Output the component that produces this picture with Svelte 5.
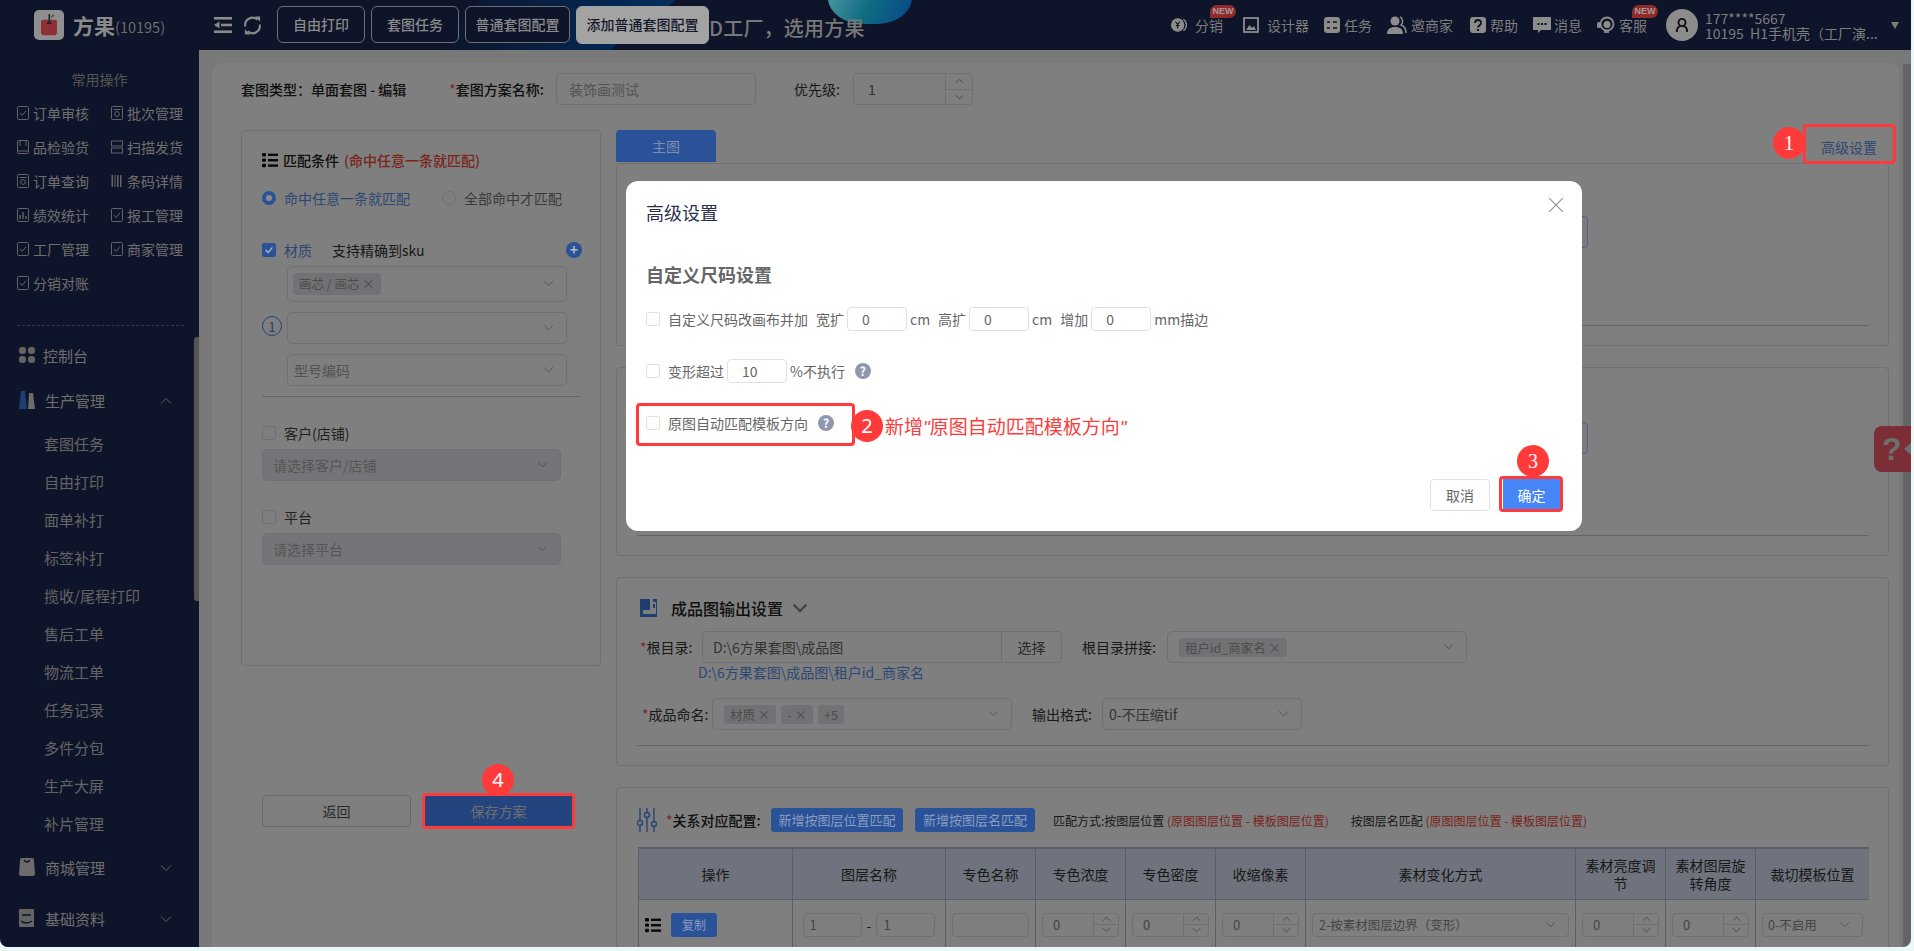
<script>
  const tabs = ['自由打印', '套图任务', '普通套图配置'];
  const quick = [
    ['订单审核', 'check'], ['批次管理', 'scan'], ['品检验货', 'book'], ['扫描发货', 'split'],
    ['订单查询', 'scan'], ['条码详情', 'bars'], ['绩效统计', 'chart'], ['报工管理', 'check'],
    ['工厂管理', 'check'], ['商家管理', 'check'], ['分销对账', 'check']
  ];
  const subs = ['套图任务', '自由打印', '面单补打', '标签补打', '揽收/尾程打印', '售后工单', '物流工单', '任务记录', '多件分包', '生产大屏', '补片管理'];
  const cols = [154, 153, 90, 90, 90, 90, 270, 90, 90, 114];
  const heads = ['操作', '图层名称', '专色名称', '专色浓度', '专色密度', '收缩像素', '素材变化方式', '素材亮度调节', '素材图层旋转角度', '裁切模板位置'];
</script>

{#snippet chev()}
  <svg class="chev" viewBox="0 0 12 8" aria-hidden="true"><path d="M1 1.5 6 6.5 11 1.5" fill="none" stroke="currentColor" stroke-width="1"/></svg>
{/snippet}

{#snippet listIcon(cls)}
  <svg class={cls} viewBox="0 0 16 16" aria-hidden="true"><g fill="currentColor"><rect x="0" y="1" width="4" height="3.4" rx="1"/><rect x="0" y="6.4" width="4" height="3.4" rx="1"/><rect x="0" y="11.8" width="4" height="3.4" rx="1"/><rect x="6" y="1.6" width="10" height="2.4"/><rect x="6" y="7" width="10" height="2.4"/><rect x="6" y="12.4" width="10" height="2.4"/></g></svg>
{/snippet}

{#snippet spin()}
  <span class="spin"><span>
    <svg viewBox="0 0 10 6" aria-hidden="true"><path d="M1 5 5 1 9 5" fill="none" stroke="currentColor"/></svg>
  </span><span>
    <svg viewBox="0 0 10 6" aria-hidden="true"><path d="M1 1 5 5 9 1" fill="none" stroke="currentColor"/></svg>
  </span></span>
{/snippet}

{#snippet help()}
  <span class="qm">?</span>
{/snippet}

{#snippet quickIcon(kind)}
  <svg class="qi" viewBox="0 0 12 14" aria-hidden="true">
    {#if kind === 'bars'}
      <g fill="currentColor"><rect x="0.5" y="1" width="1.5" height="12"/><rect x="3.5" y="1" width="1" height="12"/><rect x="6" y="1" width="1.5" height="12"/><rect x="9" y="1" width="1.5" height="12"/></g>
    {:else if kind === 'split'}
      <g fill="none" stroke="currentColor"><rect x="0.5" y="1" width="11" height="5"/><rect x="0.5" y="8" width="11" height="5"/></g>
    {:else}
      <rect x="0.5" y="0.5" width="11" height="13" rx="1" fill="none" stroke="currentColor"/>
      {#if kind === 'check'}<path d="M3 7 5.2 9.4 9 4.6" fill="none" stroke="currentColor"/>{/if}
      {#if kind === 'scan'}<circle cx="6" cy="8" r="2.4" fill="none" stroke="currentColor"/><path d="M2.5 3.5H9.5" stroke="currentColor"/>{/if}
      {#if kind === 'book'}<path d="M3 .5V6M9 .5V6" stroke="currentColor"/><path d="M.5 11H11.5" stroke="currentColor"/>{/if}
      {#if kind === 'chart'}<path d="M3 11V7M6 11V4M9 11V8" stroke="currentColor" stroke-width="1.4"/>{/if}
    {/if}
  </svg>
{/snippet}

<div class="app">
  <header class="top">
    <span class="glow"></span>
    <span class="blob"></span>
    <div class="brand">
      <svg class="logo" viewBox="0 0 30 30" aria-hidden="true">
        <rect width="30" height="30" rx="5" fill="#8f8f8f"/>
        <path d="M7 11.5c0-1 1-1.8 2-1.8h12c1 0 2 .8 2 1.8v11c0 1.5-1.2 2.8-2.8 2.8H9.8C8.2 25.3 7 24 7 22.500z" fill="#8f2f36"/>
        <path d="M14.500 4h1.600v8h1.400v2h-4.500v-2h1.500z" fill="#222"/>
        <path d="M16.500 7.500c.5-2 2-3 4-3 0 2-1.500 3.200-4 3z" fill="#2f6a3c"/>
      </svg>
      <span class="bname">方果</span><span class="bnum">(10195)</span>
    </div>
    <svg class="tool first" viewBox="0 0 18 16" aria-hidden="true"><g fill="#8a8a8a"><rect width="18" height="2.600"/><rect x="7" y="6.700" width="11" height="2.600"/><rect y="13.400" width="18" height="2.600"/><path d="M5.500 4.500V11.500L0 8z"/></g></svg>
    <svg class="tool second" viewBox="0 0 20 20" aria-hidden="true"><g fill="none" stroke="#8a8a8a" stroke-width="2.200"><path d="M2.500 11A7.500 7.500 0 0 1 15 4"/><path d="M17.500 9A7.500 7.500 0 0 1 5 16"/></g><path d="M12.500 .5H18V6z M7.500 19.500H2V14z" fill="#8a8a8a"/></svg>
    <nav class="tabs">
      {#each tabs as t}<span class="tab">{t}</span>{/each}
      <span class="tab on">添加普通套图配置</span>
    </nav>
    <span class="slogan">D工厂，选用方果</span>
    <div class="navr">
      <span class="ni wide">
        <svg class="i16" viewBox="0 0 18 18" aria-hidden="true"><circle cx="7.500" cy="9" r="7.500" fill="#8c8c8c"/><path d="M14 2.500a8 8 0 0 1 0 13" fill="none" stroke="#8c8c8c" stroke-width="1.600"/><path d="M5 5 7.500 8.500 10 5M7.500 8.500V13M5.500 9.500H9.500" fill="none" stroke="#111" stroke-width="1.200"/></svg>
        分销<em class="new n1">NEW</em>
      </span>
      <span class="ni">
        <svg class="i16" viewBox="0 0 16 16" aria-hidden="true"><rect x="1" y="1" width="14" height="14" fill="none" stroke="#8c8c8c" stroke-width="1.800"/><path d="M3 13l3.500-5 2.500 3 2-2 2 4z" fill="#8c8c8c"/></svg>
        设计器
      </span>
      <span class="ni">
        <svg class="i16" viewBox="0 0 16 16" aria-hidden="true"><rect width="16" height="16" rx="3" fill="#8c8c8c"/><path d="M3 5h3M3 11h3M9 5h4M9 11h4" stroke="#111" stroke-width="1.300"/></svg>
        任务
      </span>
      <span class="ni">
        <svg class="i20" viewBox="0 0 20 18" aria-hidden="true"><circle cx="8" cy="5" r="4.500" fill="#8c8c8c"/><path d="M0 18c0-5 3-7 8-7s8 2 8 7z" fill="#8c8c8c"/><path d="M13 1c3 1 3.500 6 1 8 3 1 5 4 5 8" fill="none" stroke="#8c8c8c" stroke-width="1.500"/></svg>
        邀商家
      </span>
      <span class="ni">
        <svg class="i16" viewBox="0 0 16 16" aria-hidden="true"><rect width="16" height="16" rx="3" fill="#8c8c8c"/><path d="M5 6c0-4 6-4 6 0 0 2.500-3 2.500-3 4.500" fill="none" stroke="#111" stroke-width="1.800"/><rect x="7" y="12" width="2" height="2" fill="#111"/></svg>
        帮助
      </span>
      <span class="ni">
        <svg class="i18" viewBox="0 0 18 18" aria-hidden="true"><path d="M0 1h18v13H8l-3 3v-3H0z" fill="#8c8c8c"/><g fill="#111"><rect x="4.500" y="7" width="2" height="2"/><rect x="8" y="7" width="2" height="2"/><rect x="11.500" y="7" width="2" height="2"/></g></svg>
        消息
      </span>
      <span class="ni">
        <svg class="i18" viewBox="0 0 18 18" aria-hidden="true"><circle cx="10" cy="8" r="6.500" fill="none" stroke="#8c8c8c" stroke-width="1.800"/><rect x="0" y="6" width="4" height="6" rx="1.500" fill="#8c8c8c"/><circle cx="10" cy="8.500" r="3.500" fill="#8c8c8c"/><path d="M7 16h5" stroke="#8c8c8c" stroke-width="1.800"/></svg>
        客服<em class="new n2">NEW</em>
      </span>
      <span class="avatar">
        <svg viewBox="0 0 16 18" aria-hidden="true"><circle cx="8" cy="6" r="4" fill="none" stroke="#111" stroke-width="2.200"/><path d="M2 17c0-5 2-7 6-7s6 2 6 7" fill="none" stroke="#111" stroke-width="2.200"/></svg>
      </span>
      <span class="user">
        <span>177****5667</span>
        <span>10195&nbsp; H1手机壳（工厂演...</span>
      </span>
      <span class="caret"></span>
    </div>
  </header>

  <div class="body">
    <aside class="side">
      <div class="qtitle">常用操作</div>
      <div class="qgrid">
        {#each quick as q}
          <span class="qitem">{@render quickIcon(q[1])}{q[0]}</span>
        {/each}
      </div>
      <div class="dash"></div>
      <div class="mrow first">
        <svg class="mi" viewBox="0 0 16 16" aria-hidden="true"><g fill="#c8c8c8"><rect width="7" height="7" rx="3"/><rect x="9" width="7" height="7" rx="3"/><rect y="9" width="7" height="7" rx="3"/><rect x="9" y="9" width="7" height="7" rx="3"/></g></svg>
        <span class="mt narrow">控制台</span>
      </div>
      <div class="mrow second">
        <svg class="mi" viewBox="0 0 16 18" aria-hidden="true"><path d="M2 0h4l2 18H0z" fill="#3f7ee0"/><path d="M10 2h4l2 16H9z" fill="#d8d8d8"/></svg>
        <span class="mt">生产管理</span>
        <svg class="mc" viewBox="0 0 12 8" aria-hidden="true"><path d="M1 6.500 6 1.500 11 6.500" fill="none" stroke="currentColor"/></svg>
      </div>
      <div class="subs">
        {#each subs as s}<div class="sub">{s}</div>{/each}
      </div>
      <div class="mrow third">
        <svg class="mi" viewBox="0 0 16 18" aria-hidden="true"><path d="M1 2q0-2 2-2h10q2 0 2 2l1 14q0 2-2 2H2q-2 0-2-2z" fill="#d8d8d8"/><path d="M5 2q3 4 6 0" fill="none" stroke="#1c2852" stroke-width="1.500"/></svg>
        <span class="mt">商城管理</span>
        <svg class="mc" viewBox="0 0 12 8" aria-hidden="true"><path d="M1 1.500 6 6.500 11 1.500" fill="none" stroke="currentColor"/></svg>
      </div>
      <div class="mrow fourth">
        <svg class="mi" viewBox="0 0 16 18" aria-hidden="true"><rect width="15" height="18" rx="1" fill="#c8c8c8"/><path d="M3 6h9M2 12q5 4 11 0" fill="none" stroke="#1c2852" stroke-width="1.500"/></svg>
        <span class="mt">基础资料</span>
        <svg class="mc" viewBox="0 0 12 8" aria-hidden="true"><path d="M1 1.500 6 6.500 11 1.500" fill="none" stroke="currentColor"/></svg>
      </div>
      <span class="sthumb"></span>
    </aside>

    <main class="main">
      <div class="card">
        <div class="headrow">
          <span class="strong">套图类型：单面套图 - 编辑</span>
          <span class="strong nameLabel"><i class="star">*</i>套图方案名称:</span>
          <span class="field nameInput ph">装饰画测试</span>
          <span class="prio">优先级:</span>
          <span class="field prioInput"><span class="pv">1</span>{@render spin()}</span>
        </div>
        <div class="cols">
          <div class="leftcol">
            <section class="panel">
              <div class="ptitle">{@render listIcon('plist')}<b>匹配条件</b><b class="red">(命中任意一条就匹配)</b></div>
              <div class="radios">
                <span class="radio"><i class="dot on"></i><span class="blue">命中任意一条就匹配</span></span>
                <span class="radio r2"><i class="dot"></i><span>全部命中才匹配</span></span>
              </div>
              <div class="check first">
                <i class="box on"><svg viewBox="0 0 14 14" aria-hidden="true"><path d="M3 7 6 10 11 4" fill="none" stroke="#b8b8b8" stroke-width="1.600"/></svg></i>
                <span class="blue">材质</span><span class="hint">支持精确到sku</span>
                <i class="plus">+</i>
              </div>
              <div class="indent"><span class="sel tall"><span class="tag">画芯 / 画芯 <u>×</u></span>{@render chev()}</span></div>
              <div class="indent mid"><i class="one">1</i><span class="sel">{@render chev()}</span></div>
              <div class="indent mid"><span class="sel ph">型号编码{@render chev()}</span></div>
              <div class="rule"></div>
              <div class="check cust"><i class="box"></i><span>客户(店铺)</span></div>
              <span class="sel dis">请选择客户/店铺{@render chev()}</span>
              <div class="check cust"><i class="box"></i><span>平台</span></div>
              <span class="sel dis">请选择平台{@render chev()}</span>
            </section>
            <div class="actions">
              <button class="btn">返回</button>
              <button class="btn pri">保存方案</button>
            </div>
          </div>

          <div class="rightcol">
            <div class="tabrow"><span class="mtab">主图</span><span class="adv">高级设置</span></div>
            <section class="box1 c1"><span class="ghost one1"></span><div class="hr"></div></section>
            <section class="box1 c2"><span class="ghost two1"></span><div class="hr"></div></section>
            <section class="box1 c3">
              <div class="ctitle">
                <svg class="ci" viewBox="0 0 17 18" aria-hidden="true"><path d="M0 0h10v11H3v4h13V0h1v18H0z" fill="#3f7ee0"/><path d="M13 0h3v3h-3zM13 5h2v4h-2z" fill="#3f7ee0"/></svg>
                <b>成品图输出设置</b>
                <svg class="cc" viewBox="0 0 16 10" aria-hidden="true"><path d="M1.500 1.500 8 8 14.500 1.500" fill="none" stroke="#888" stroke-width="2.400"/></svg>
              </div>
              <div class="frow r1">
                <span class="lab w54"><i class="star">*</i>根目录:</span>
                <span class="field rootInput val">D:\6方果套图\成品图</span>
                <span class="choose">选择</span>
                <span class="lab w76 ml20">根目录拼接:</span>
                <span class="sel wide300"><span class="tag">租户id_商家名 <u>×</u></span>{@render chev()}</span>
              </div>
              <div class="plink">D:\6方果套图\成品图\租户id_商家名</div>
              <div class="frow r2b">
                <span class="lab w66"><i class="star">*</i>成品命名:</span>
                <span class="sel wide300"><span class="tag">材质 <u>×</u></span><span class="tag">- <u>×</u></span><span class="tag">+5</span>{@render chev()}</span>
                <span class="lab w63 ml20">输出格式:</span>
                <span class="sel wide200 val">0-不压缩tif{@render chev()}</span>
              </div>
              <div class="hr h3"></div>
            </section>
            <section class="box1 c4">
              <div class="rtitle">
                <svg class="ri" viewBox="0 0 20 24" aria-hidden="true"><g fill="none" stroke="#4a86e8" stroke-width="1.400"><path d="M3 0v24M10 0v24M17 0v24"/><circle cx="3" cy="15" r="2.500" fill="#fff"/><circle cx="10" cy="7" r="2.500" fill="#fff"/><circle cx="17" cy="16" r="2.500" fill="#fff"/></g></svg>
                <b class="rlab"><i class="star">*</i>关系对应配置:</b>
                <span class="bb b132">新增按图层位置匹配</span>
                <span class="bb b120">新增按图层名匹配</span>
                <span class="note n1st">匹配方式:按图层位置 <em>(原图图层位置 - 模板图层位置)</em></span>
                <span class="note">按图层名匹配 <em>(原图图层位置 - 模板图层位置)</em></span>
              </div>
              <div class="twrap">
                <table>
                  <colgroup>{#each cols as c}<col style:width="{c}px" />{/each}</colgroup>
                  <thead><tr>{#each heads as h}<th>{h}</th>{/each}</tr></thead>
                  <tbody>
                    <tr>
                      <td><div class="cell">{@render listIcon('tlist')}<span class="copy">复制</span></div></td>
                      <td><div class="cell c"><span class="ti w59">1</span><span>-</span><span class="ti w59">1</span></div></td>
                      <td><div class="cell c"><span class="ti w79"></span></div></td>
                      {#each [0, 1, 2] as _}
                        <td><div class="cell c"><span class="ti num">0{@render spin()}</span></div></td>
                      {/each}
                      <td><div class="cell c"><span class="ti w259">2-按素材图层边界（变形）{@render chev()}</span></div></td>
                      {#each [0, 1] as _}
                        <td><div class="cell c"><span class="ti num">0{@render spin()}</span></div></td>
                      {/each}
                      <td><div class="cell"><span class="ti last">0-不启用{@render chev()}</span></div></td>
                    </tr>
                  </tbody>
                </table>
              </div>
            </section>
          </div>
        </div>
      </div>
      <span class="vbar"></span>
      <span class="helpw">
        <b>?</b><i></i>
      </span>
    </main>
  </div>

  <div class="mask"></div>

  <div class="modal">
    <div class="mhead">高级设置
      <svg class="x" viewBox="0 0 14 14" aria-hidden="true"><path d="M0 0 14 14M14 0 0 14" stroke="#8f8f94" stroke-width="1.100"/></svg>
    </div>
    <div class="msec">自定义尺码设置</div>
    <div class="mr rowa">
      <i class="box"></i><span class="tx">自定义尺码改画布并加</span>
      <span class="tx l8">宽扩</span><span class="mi60">0</span><span class="tx">cm</span>
      <span class="tx l8">高扩</span><span class="mi60">0</span><span class="tx">cm</span>
      <span class="tx l8">增加</span><span class="mi60">0</span><span class="tx">mm描边</span>
    </div>
    <div class="mr">
      <i class="box"></i><span class="tx">变形超过</span><span class="mi60">10</span><span class="tx">%不执行</span>{@render help()}
    </div>
    <div class="mr">
      <i class="box"></i><span class="tx">原图自动匹配模板方向</span>{@render help()}
    </div>
    <div class="mfoot">
      <button class="mb">取消</button>
      <button class="mb ok">确定</button>
    </div>
  </div>

  <span class="rb rb1"></span>
  <span class="rb rb2"></span>
  <span class="rb rb3"></span>
  <span class="rb rb4"></span>
  <span class="badge bd1 serif">1</span>
  <span class="badge bd2">2</span>
  <span class="badge bd3 serif">3</span>
  <span class="badge bd4">4</span>
  <span class="redtext">新增<span class="it">"</span>原图自动匹配模板方向<span class="it">"</span></span>
</div>

<style>
  :global(body) { background: #e9f8f8; font-family: "Noto Sans CJK SC", "Noto Sans", sans-serif; }
  .app { position: relative; width: 1911px; height: 947px; overflow: hidden; border-radius: 0 0 8px 8px; font-size: 14px; display: flex; flex-direction: column; background: #f2f3f3; color: #3a3a3a; }
  i, em, u { font-style: normal; text-decoration: none; }

  /* header */
  .top { position: relative; z-index: 5; height: 50px; flex: none; display: flex; align-items: center; background: #0e1429; color: #7e7e7e; overflow: hidden; }
  .glow { position: absolute; left: 430px; top: 0; width: 250px; height: 50px; clip-path: polygon(50px 0, 246px 0, 180px 50px, 6px 50px); background: linear-gradient(90deg, #0e1429 0%, #04264f 70%, #03305e 100%); }
  .blob { position: absolute; left: 828px; top: -40px; width: 84px; height: 64px; border-radius: 0 0 36px 36px / 0 0 26px 26px; background: linear-gradient(115deg, #5fa7ad 0%, #0e6b80 55%, #08468c 100%); }
  .brand { position: relative; width: 214px; flex: none; padding-left: 34px; box-sizing: border-box; display: flex; align-items: center; }
  .logo { width: 30px; height: 30px; margin-right: 9px; }
  .bname { font-size: 21px; font-weight: 700; color: #8a8a8a; }
  .bnum { font-size: 14.500px; color: #6c6c70; margin-top: 2px; }
  .tool { position: relative; flex: none; }
  .tool.first { width: 18px; height: 16px; }
  .tool.second { width: 19px; height: 19px; margin-left: 11px; }
  .tabs { position: relative; display: flex; gap: 6px; margin-left: 15px; }
  .tab { height: 37px; box-sizing: border-box; line-height: 35px; padding: 0 15px; border: 1px solid #6f7074; border-radius: 6px; font-size: 14px; font-weight: 500; color: #8a8a8a; background: #0e1429; }
  .tab:nth-child(3) { padding: 0 9.500px; }
  .tab.on { background: #a3a3a3; border-color: #a3a3a3; color: #14182c; padding: 0 9.500px; height: 38px; }
  .slogan { position: relative; font-size: 20px; font-weight: 500; color: #787878; letter-spacing: .2px; margin-top: 4px; }
  .navr { position: relative; margin-left: auto; display: flex; align-items: center; }
  .ni { position: relative; display: flex; align-items: center; gap: 4px; margin-right: 15px; font-size: 14px; color: #7e7e7e; white-space: nowrap; }
  .ni.wide { margin-right: 20px; gap: 8px; }
  .ni:nth-child(2) { gap: 8px; }
  .ni:nth-child(4) { margin-right: 17px; }
  .ni:nth-child(6) { gap: 3px; }
  .ni:nth-child(7) { margin-right: 19px; }
  .i16 { width: 16px; height: 16px; flex: none; }
  .i18 { width: 18px; height: 18px; flex: none; }
  .i20 { width: 20px; height: 18px; flex: none; }
  .new { position: absolute; top: -10px; left: 35px; width: 26px; height: 13px; line-height: 13px; border-radius: 7px 7px 7px 0; background: #8f2a2a; color: #a99; font-size: 9px; font-weight: 700; text-align: center; font-family: "Liberation Sans", sans-serif; }
  .new.n1 { left: 39px; }
  .avatar { width: 32px; height: 32px; border-radius: 50%; background: #8c8c8c; display: flex; align-items: center; justify-content: center; flex: none; }
  .avatar svg { width: 14px; height: 16px; }
  .user { width: 178px; margin-left: 7px; display: flex; flex-direction: column; line-height: 15px; font-size: 14px; color: #7e7e7e; white-space: nowrap; margin-top: 1px; }
  .caret { width: 0; height: 0; border: 4px solid transparent; border-top: 7px solid #7e7e7e; border-bottom: 0; margin: 0 12px 0 8px; }

  /* body */
  .body { flex: 1; min-height: 0; display: flex; }
  .side { position: relative; width: 199px; flex: none; background: #1c2852; color: #dcdcdc; padding-top: 19px; box-sizing: border-box; }
  .qtitle { text-align: center; line-height: 20px; color: #aaa; }
  .qgrid { display: grid; grid-template-columns: 94px 94px; grid-auto-rows: 34px; margin: 7px 0 0 17px; }
  .qitem { display: flex; align-items: center; gap: 4px; font-size: 14px; white-space: nowrap; }
  .qi { width: 12px; height: 14px; flex: none; color: #c8c8c8; }
  .dash { margin: 25px 15px 0 17px; border-top: 1px dashed #6d7388; }
  .mrow { position: relative; height: 40px; display: flex; align-items: center; padding-left: 19px; font-size: 15px; }
  .mrow.first { margin-top: 9px; }
  .mrow.second { margin-top: 5px; }
  .mrow.third { margin-top: 4px; }
  .mrow.fourth { margin-top: 11px; }
  .mi { width: 16px; height: 18px; flex: none; }
  .mt { margin-left: 10px; }
  .mt.narrow { margin-left: 8px; }
  .mc { position: absolute; left: 160px; top: 17px; width: 12px; height: 8px; color: #c8c8c8; }
  .subs { margin-top: 5px; }
  .sub { height: 38px; line-height: 38px; padding-left: 44px; font-size: 15px; color: #c8c8c8; }
  .sthumb { position: absolute; left: 194px; top: 287px; width: 5px; height: 264px; background: #aaa; border-radius: 3px 0 0 3px; }

  .main { position: relative; flex: 1; min-width: 0; padding: 13px 12px 0 13px; box-sizing: border-box; }
  .vbar { position: absolute; right: 0; top: 14px; bottom: 0; width: 8px; background: #c8c8ca; }
  .card { height: 100%; background: #fff; border-radius: 10px 10px 0 0; padding: 10px 10px 0 29px; box-sizing: border-box; overflow: hidden; }
  .headrow { display: flex; align-items: center; height: 32px; white-space: nowrap; }
  .strong { font-weight: 500; color: #222; }
  .nameLabel { margin-left: 43px; }
  .star { color: #f44; font-weight: 400; }
  .field { box-sizing: border-box; height: 32px; border: 1px solid #dfe1e8; border-radius: 4px; line-height: 30px; padding: 0 10px; background: #fff; display: flex; align-items: center; }
  .ph { color: #a6a6a6; }
  .val { color: #666; }
  .nameInput { width: 200px; margin-left: 12px; padding-left: 12px; }
  .prio { margin-left: 38px; width: 59px; color: #333; }
  .prioInput { width: 120px; padding: 0 0 0 14px; color: #666; justify-content: space-between; }
  .spin { align-self: stretch; width: 26px; display: flex; flex-direction: column; border-left: 1px solid #dfe1e8; color: #888; flex: none; }
  .spin > span { flex: 1; display: flex; align-items: center; justify-content: center; }
  .spin > span + span { border-top: 1px solid #dfe1e8; }
  .spin svg { width: 9px; height: 6px; }

  .cols { display: flex; gap: 15px; margin-top: 25px; align-items: flex-start; }
  .leftcol { width: 360px; flex: none; }
  .panel { box-sizing: border-box; height: 536px; border: 1px solid #dfe1e8; border-radius: 4px; padding: 19px 20px 0; display: flex; flex-direction: column; align-items: flex-start; }
  .ptitle { display: flex; align-items: center; height: 20px; gap: 5px; white-space: nowrap; color: #222; }
  .ptitle b { font-weight: 500; }
  .red { color: #f24a3a; }
  :global(.plist) { width: 16px; height: 16px; color: #111; flex: none; }
  .radios { display: flex; margin-top: 18px; height: 20px; }
  .radio { display: flex; align-items: center; gap: 8px; white-space: nowrap; color: #777; }
  .r2 { margin-left: 32px; }
  .blue { color: #5b8fe8; }
  .dot { position: relative; width: 14px; height: 14px; border-radius: 50%; border: 1px solid #dfe1e8; box-sizing: border-box; }
  .dot.on { z-index: 7; border: 4px solid #2a5299; background: #8c8c8c; }
  .check { position: relative; display: flex; align-items: center; gap: 8px; height: 20px; width: 100%; color: #444; }
  .check.first { margin-top: 32px; }
  .check.cust { margin-top: 26px; }
  .box { position: relative; width: 14px; height: 14px; box-sizing: border-box; border: 1px solid #dfe1e8; border-radius: 2px; background: #fff; flex: none; display: block; }
  .box.on { z-index: 7; background: #2a5299; border-color: #2a5299; }
  .box svg { display: block; width: 12px; height: 12px; }
  .hint { margin-left: 12px; color: #333; }
  .plus { position: absolute; z-index: 7; right: -2px; top: 2px; width: 16px; height: 16px; border-radius: 50%; background: #2a5299; color: #b8b8b8; text-align: center; line-height: 15px; font-weight: 700; font-size: 14px; }
  .indent { position: relative; margin: 6px 0 0 25px; width: 280px; }
  .indent.mid { margin-top: 10px; }
  .one { position: absolute; left: -25px; top: 4px; width: 20px; height: 20px; box-sizing: border-box; border: 1px solid #4a86e8; border-radius: 50%; text-align: center; line-height: 18px; color: #4a86e8; }
  .sel { position: relative; box-sizing: border-box; height: 32px; width: 280px; border: 1px solid #dfe1e8; border-radius: 5px; display: flex; align-items: center; gap: 5px; padding-left: 5px; white-space: nowrap; background: #fff; }
  .indent .ph, .val.sel { padding-left: 6px; }
  .sel.tall { height: 36px; }
  .sel.dis { width: 299px; margin-top: 6px; background: #e8eaf2; color: #aaa; padding-left: 10px; }
  .chev { position: absolute; right: 12px; top: 50%; margin-top: -4px; width: 11px; height: 7px; color: #999; }
  .tag { height: 22px; line-height: 22px; padding: 0 6px; border-radius: 3px; background: #e2e4ea; color: #999; font-size: 12.500px; flex: none; }
  .rule { align-self: stretch; border-top: 1px solid #c8cad2; margin: 10px -1px 0 0; }
  .actions { display: flex; gap: 13px; padding-left: 21px; margin-top: 129px; }
  .btn { width: 149px; height: 32px; border: 1px solid #cfd1d8; border-radius: 4px; background: #fff; font: inherit; color: #555; padding: 0; }
  .btn.pri { background: #4688fe; border-color: #4688fe; color: #ddd; }

  .rightcol { flex: 1; min-width: 0; }
  .tabrow { display: flex; justify-content: space-between; align-items: center; height: 33px; padding-right: 12px; }
  .mtab { position: relative; z-index: 7; width: 100px; height: 32px; line-height: 32px; text-align: center; border-radius: 4px 4px 0 0; background: #2a5299; color: #7f8cab; align-self: flex-start; }
  .adv { color: #5b8fe8; }
  .box1 { position: relative; box-sizing: border-box; border: 1px solid #dfe1e8; border-radius: 4px; margin-bottom: 21px; padding: 0 19px; }
  .c1 { height: 183px; }
  .c2 { height: 189px; }
  .c3 { height: 189px; padding-top: 18px; }
  .c4 { height: 300px; padding: 20px 19px 0 21px; }
  .ghost { position: absolute; right: 300px; width: 200px; height: 32px; border: 1px solid #a8c2ee; border-radius: 4px; box-sizing: border-box; background: #f4f6fb; }
  .one1 { top: 52px; }
  .two1 { top: 54px; }
  .hr { position: absolute; left: 20px; right: 19px; top: 161px; border-top: 1px solid #c8cad2; }
  .c2 .hr { top: 167px; }
  .hr.h3 { top: 167px; }
  .ctitle { display: flex; align-items: center; height: 24px; padding-left: 4px; }
  .ctitle b { font-size: 16px; font-weight: 500; color: #222; margin-left: 14px; }
  .ci { width: 17px; height: 18px; }
  .cc { width: 16px; height: 10px; margin-left: 9px; }
  .frow { display: flex; align-items: center; padding-left: 4px; white-space: nowrap; }
  .r1 { margin-top: 11px; }
  .r2b { margin-top: 17px; padding-left: 6px; }
  .lab { color: #333; box-sizing: content-box; flex: none; }
  .w54 { width: 54px; margin-right: 8px; }
  .w76 { width: 76px; margin-right: 9px; }
  .w66 { width: 66px; margin-right: 4px; }
  .w63 { width: 63px; margin-right: 7px; }
  .ml20 { margin-left: 20px; }
  .rootInput { width: 300px; border-radius: 4px 0 0 4px; }
  .choose { width: 60px; height: 32px; box-sizing: border-box; border: 1px solid #dfe1e8; border-left: 0; border-radius: 0 4px 4px 0; text-align: center; line-height: 30px; color: #555; }
  .wide300 { width: 300px; padding-left: 11px; }
  .wide200 { width: 200px; padding-left: 10px; }
  .frow .tag { height: 19px; line-height: 19px; }
  .plink { margin-left: 62px; height: 18px; line-height: 18px; color: #5b8fe8; white-space: nowrap; }
  .rtitle { display: flex; align-items: center; height: 24px; white-space: nowrap; }
  .ri { width: 20px; height: 24px; flex: none; margin-left: -1px; }
  .rlab { font-weight: 500; color: #222; margin-left: 9px; width: 105px; }
  .bb { position: relative; z-index: 7; height: 24px; line-height: 24px; background: #2a5299; color: #8c9cbf; border-radius: 3px; font-size: 13px; text-align: center; flex: none; }
  .b132 { width: 132px; }
  .b120 { width: 120px; margin-left: 12px; }
  .note { font-size: 12px; color: #333; margin-left: 22px; }
  .note em { color: #f24a3a; }
  .n1st { margin-left: 18px; }
  .twrap { margin-top: 15px; width: 1231px; overflow: hidden; }
  table { border-collapse: collapse; table-layout: fixed; width: 1231px; }
  th { height: 51px; box-sizing: border-box; background: #dfe6fb; border: 1px solid #b6bccd; border-top-width: 2px; font-weight: 400; color: #333; padding: 0 5px; line-height: 18px; }
  td { height: 60px; border: 1px solid #b6bccd; border-top: 0; padding: 13px 6px 0; vertical-align: top; }
  .cell { display: flex; align-items: center; gap: 5px; height: 24px; }
  .cell.c { justify-content: center; }
  :global(.tlist) { width: 16px; height: 16px; color: #111; flex: none; margin-right: 5px; }
  .copy { position: relative; z-index: 7; width: 32px; height: 24px; line-height: 24px; padding: 0 7px; background: #2a5299; color: #8c9cbf; font-size: 12px; border-radius: 3px; text-align: center; flex: none; }
  .ti { position: relative; height: 24px; box-sizing: border-box; border: 1px solid #dfe1e8; border-radius: 4px; line-height: 22px; padding: 0 6px; color: #888; font-size: 13px; display: flex; align-items: center; white-space: nowrap; }
  .w59 { width: 59px; }
  .w79 { width: 79px; }
  .w259 { width: 259px; font-size: 12.500px; }
  .num { width: 79px; justify-content: space-between; padding: 0 0 0 10px; }
  .num .spin { width: 24px; }
  .last { width: 106px; font-size: 12.500px; padding-left: 5px; }
  .helpw { position: absolute; right: 0; top: 376px; width: 37px; height: 46px; border-radius: 8px 0 0 8px; background: #f65d6c; color: #dcdcdc; display: flex; align-items: center; overflow: hidden; }
  .helpw b { font-size: 32px; line-height: 32px; font-family: "Liberation Sans", sans-serif; margin-left: 8px; }
  .helpw i { position: absolute; right: 0; top: 17px; border: 6px solid transparent; border-right: 7px solid #dcdcdc; border-left: 0; }

  /* overlay */
  .mask { position: absolute; inset: 50px 0 0 0; background: rgba(0, 0, 0, .5); z-index: 6; }
  .modal { position: absolute; z-index: 8; left: 626px; top: 181px; width: 956px; height: 350px; background: #fff; border-radius: 12px; padding: 0 20px; box-sizing: border-box; display: flex; flex-direction: column; color: #666; }
  .mhead { position: relative; height: 64px; line-height: 62px; font-size: 18px; color: #2a2f4a; }
  .x { position: absolute; right: -1px; top: 17px; width: 14px; height: 14px; }
  .msec { margin-top: 17px; height: 24px; line-height: 24px; font-size: 18px; font-weight: 700; color: #666; }
  .mr { display: flex; align-items: center; height: 24px; margin-top: 28px; white-space: nowrap; }
  .mr.rowa { margin-top: 21px; }
  .mr .box { margin-right: 8px; }
  .tx { color: #666; }
  .l8 { margin-left: 8px; }
  .mi60 { width: 60px; height: 24px; box-sizing: border-box; margin: 0 3px; border: 1px solid #dfe1e8; border-radius: 4px; padding-left: 14px; line-height: 22px; color: #666; font-size: 14px; }
  .qm { width: 16px; height: 16px; border-radius: 50%; margin-left: 10px; background: #8f98ad; color: #fff; font-size: 12px; font-weight: 700; text-align: center; line-height: 16px; flex: none; }
  .mfoot { margin-top: auto; padding: 0 2px 20px 0; display: flex; justify-content: flex-end; gap: 13px; }
  .mb { width: 60px; height: 32px; padding: 0; border: 1px solid #dfe1e8; border-radius: 4px; background: #fff; color: #666; font: inherit; }
  .mb.ok { width: 57px; border-color: #4686f8; background: #4686f8; color: #fff; border-radius: 0; }

  .rb { position: absolute; z-index: 9; box-sizing: border-box; border: 3px solid #ff3a3a; border-radius: 4px; pointer-events: none; }
  .rb1 { left: 1803px; top: 124px; width: 93px; height: 40px; }
  .rb2 { left: 636px; top: 403px; width: 219px; height: 43px; }
  .rb3 { left: 1499px; top: 476px; width: 64px; height: 36px; }
  .rb4 { left: 422px; top: 793px; width: 153px; height: 36px; }
  .badge { position: absolute; z-index: 10; width: 32px; height: 32px; border-radius: 50%; background: #ff3a3a; color: #fff; text-align: center; line-height: 32px; font-size: 20px; font-family: "Noto Sans", sans-serif; }
  .serif { font-family: "Liberation Serif", serif; }
  .bd1 { left: 1773px; top: 127px; }
  .bd2 { left: 851px; top: 410px; }
  .bd3 { left: 1517px; top: 445px; }
  .bd4 { left: 482px; top: 764px; }
  .redtext { position: absolute; z-index: 10; left: 885px; top: 411px; line-height: 30px; font-size: 19px; color: #ff3a3a; white-space: nowrap; }
  .it { font-style: italic; font-family: "Liberation Sans", sans-serif; }
</style>
